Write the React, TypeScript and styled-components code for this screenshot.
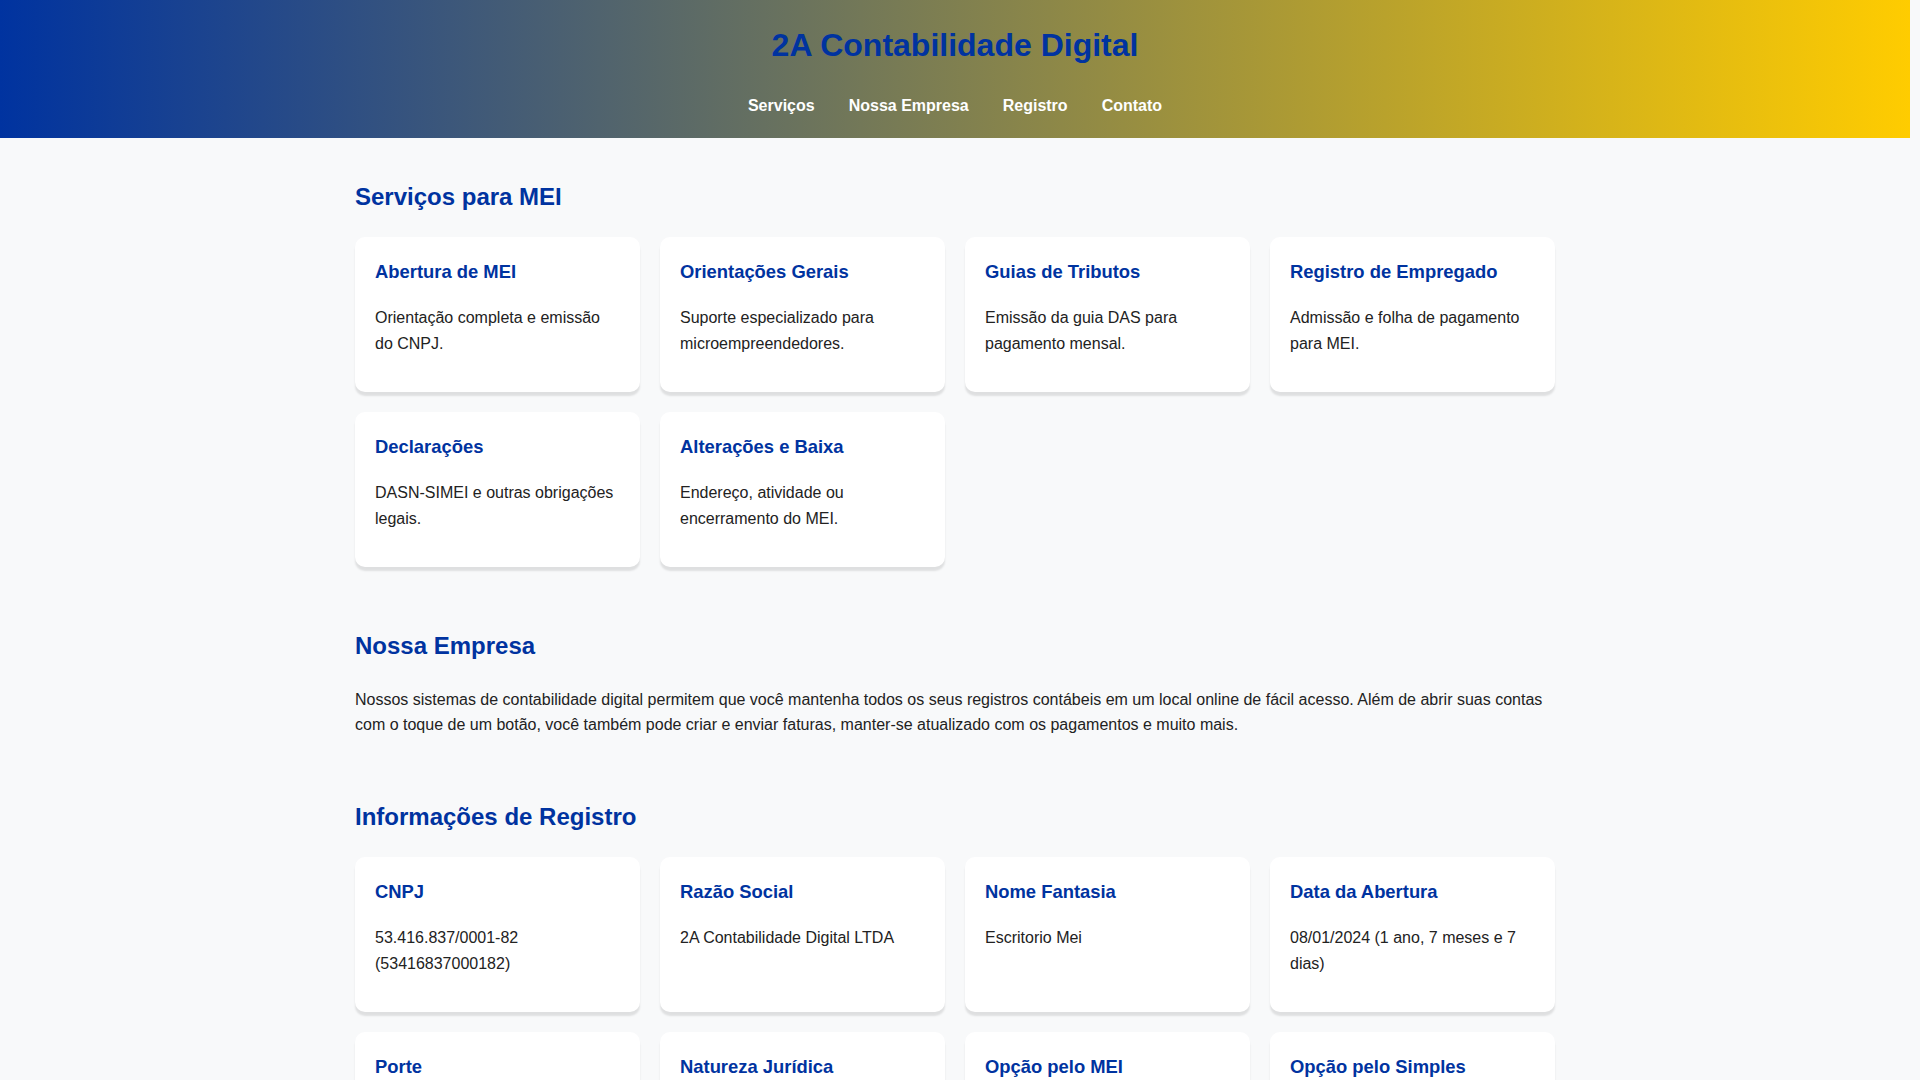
import styled, { createGlobalStyle } from "styled-components"

type Item = {
  title: string
  text: string
}

const servicos: Item[] = [
  { title: "Abertura de MEI", text: "Orientação completa e emissão do CNPJ." },
  { title: "Orientações Gerais", text: "Suporte especializado para microempreendedores." },
  { title: "Guias de Tributos", text: "Emissão da guia DAS para pagamento mensal." },
  { title: "Registro de Empregado", text: "Admissão e folha de pagamento para MEI." },
  { title: "Declarações", text: "DASN-SIMEI e outras obrigações legais." },
  { title: "Alterações e Baixa", text: "Endereço, atividade ou encerramento do MEI." },
]

const registro: Item[] = [
  { title: "CNPJ", text: "53.416.837/0001-82 (53416837000182)" },
  { title: "Razão Social", text: "2A Contabilidade Digital LTDA" },
  { title: "Nome Fantasia", text: "Escritorio Mei" },
  { title: "Data da Abertura", text: "08/01/2024 (1 ano, 7 meses e 7 dias)" },
  { title: "Porte", text: "ME" },
  { title: "Natureza Jurídica", text: "Empresário (Individual)" },
  { title: "Opção pelo MEI", text: "Sim" },
  { title: "Opção pelo Simples", text: "Sim" },
  { title: "Situação Cadastral", text: "Ativa" },
  { title: "Capital Social", text: "R$ 1.000,00" },
  { title: "Atividade Principal", text: "Atividades de contabilidade" },
  { title: "Município", text: "São Paulo - SP" },
]

const contato: Item[] = [
  { title: "Telefone", text: "(11) 4002-8922" },
  { title: "E-mail", text: "contato@2acontabilidade.com.br" },
  { title: "Atendimento", text: "Segunda a sexta, das 9h às 18h." },
]

const GlobalStyle = createGlobalStyle`
  body {
    margin: 0;
    background-color: #f8f9fa;
    color: #222;
    font-family: "Liberation Sans", Arial, sans-serif;
    line-height: 1.6;
  }
`

// the page scrolls inside this shell, with a 10px gutter for the thin scrollbar
const Page = styled.div`
  height: 100vh;
  overflow-y: scroll;
  padding-right: 10px;
  box-sizing: border-box;

  &::-webkit-scrollbar {
    width: 10px;
  }
  &::-webkit-scrollbar-track {
    background: #f8f9fa;
  }
  &::-webkit-scrollbar-thumb {
    background: #111;
    border-radius: 10px;
    border: 2px solid #f8f9fa;
  }
`

const Header = styled.header`
  background: linear-gradient(90deg, #0033a0, #ffcc00);
  text-align: center;
  padding: 27px 0 23px;
`

const Title = styled.h1`
  margin: 0;
  font-size: 32px;
  line-height: 37px;
  color: #0033a0;
`

const Nav = styled.nav`
  margin-top: 33px;
  display: flex;
  justify-content: center;
  gap: 34px;
`

const NavLink = styled.a`
  color: #fff;
  font-weight: bold;
  font-size: 16px;
  line-height: 18px;
  text-decoration: none;
`

const Main = styled.main`
  max-width: 1200px;
  margin: 0 auto;
  padding-top: 40px;
  display: flex;
  flex-direction: column;
  gap: 60px;
`

const Section = styled.section``

const SectionTitle = styled.h2`
  margin: 0 0 21px;
  font-size: 24px;
  color: #0033a0;
`

const Grid = styled.div`
  display: grid;
  grid-template-columns: repeat(4, 1fr);
  gap: 20px;
`

const Card = styled.div`
  background-color: #fff;
  border-radius: 10px;
  padding: 20px;
  box-shadow: 0 4px 2px rgba(0, 0, 0, 0.1);
`

const CardTitle = styled.h3`
  margin: 0 0 1em;
  font-size: 1.15rem;
  color: #0033a0;
`

const CardText = styled.p`
  margin: 0 0 16px;
`

const Text = styled.p`
  margin: 0;
`

const Footer = styled.footer`
  margin-top: 60px;
  padding: 36px 0;
  background-color: #0033a0;
  color: #fff;
  text-align: center;
`

function CardGrid({ items }: { items: Item[] }) {
  return (
    <Grid>
      {items.map((item) => (
        <Card key={item.title}>
          <CardTitle>{item.title}</CardTitle>
          <CardText>{item.text}</CardText>
        </Card>
      ))}
    </Grid>
  )
}

export default function App() {
  return (
    <Page>
      <GlobalStyle />
      <Header>
        <Title>2A Contabilidade Digital</Title>
        <Nav>
          <NavLink href="#servicos">Serviços</NavLink>
          <NavLink href="#empresa">Nossa Empresa</NavLink>
          <NavLink href="#registro">Registro</NavLink>
          <NavLink href="#contato">Contato</NavLink>
        </Nav>
      </Header>

      <Main>
        <Section id="servicos">
          <SectionTitle>Serviços para MEI</SectionTitle>
          <CardGrid items={servicos} />
        </Section>

        <Section id="empresa">
          <SectionTitle>Nossa Empresa</SectionTitle>
          <Text>
            Nossos sistemas de contabilidade digital permitem que você mantenha
            todos os seus registros contábeis em um local online de fácil
            acesso. Além de abrir suas contas com o toque de um botão, você
            também pode criar e enviar faturas, manter-se atualizado com os
            pagamentos e muito mais.
          </Text>
        </Section>

        <Section id="registro">
          <SectionTitle>Informações de Registro</SectionTitle>
          <CardGrid items={registro} />
        </Section>

        <Section id="contato">
          <SectionTitle>Contato</SectionTitle>
          <CardGrid items={contato} />
        </Section>
      </Main>

      <Footer>© 2024 2A Contabilidade Digital. Todos os direitos reservados.</Footer>
    </Page>
  )
}
